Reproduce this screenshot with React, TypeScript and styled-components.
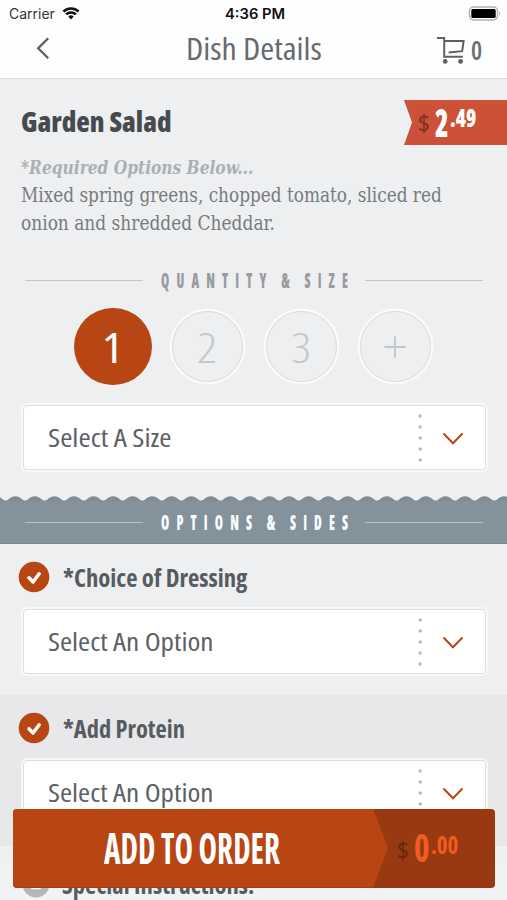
import React, { useLayoutEffect, useRef, useState } from "react";
import styled, { createGlobalStyle, css } from "styled-components";

const sans = `"Open Sans", "Noto Sans", sans-serif`;
const serif = `"DejaVu Serif", "Liberation Serif", serif`;
const rust = "#b84614";

const GlobalStyle = createGlobalStyle`
  * { box-sizing: border-box; }
  html, body { margin: 0; padding: 0; }
  body { background: #eeeff1; overflow: hidden; }
`;

/* Text set to an exact measure, condensed horizontally when needed. */
interface FaceProps {
  $w: number;
  $size: number;
  $line: number;
  $color: string;
  $weight?: number;
  $serif?: boolean;
  $italic?: boolean;
  $track?: number;
  $family?: string;
}

const Measure = styled.span<FaceProps>`
  display: block;
  flex: none;
  width: ${(p) => p.$w}px;
  height: ${(p) => p.$line}px;
  font-family: ${(p) => p.$family ?? (p.$serif ? serif : sans)};
  font-size: ${(p) => p.$size}px;
  line-height: ${(p) => p.$line}px;
  font-weight: ${(p) => p.$weight ?? 400};
  font-stretch: 75%;
  color: ${(p) => p.$color};
  white-space: nowrap;
  ${(p) => p.$italic && css`font-style: italic;`}
  ${(p) => p.$track && css`
    letter-spacing: ${p.$track}px;
    word-spacing: -3px;
  `}
`;

const Glyphs = styled.span<{ $track?: number }>`
  display: inline-block;
  vertical-align: top;
  transform-origin: 0 50%;
  margin-right: ${(p) => -(p.$track ?? 0)}px;
`;

function Fit({ children, ...face }: FaceProps & { children: string }) {
  const ref = useRef<HTMLSpanElement>(null);
  const [scale, setScale] = useState(1);
  useLayoutEffect(() => {
    const el = ref.current;
    if (el) setScale(face.$w / (el.offsetWidth - (face.$track ?? 0)));
  }, [children, face.$w, face.$track]);
  return (
    <Measure {...face}>
      <Glyphs ref={ref} $track={face.$track} style={{ transform: `scaleX(${scale})` }}>
        {children}
      </Glyphs>
    </Measure>
  );
}

const Screen = styled.main`
  position: relative;
  width: 507px;
  height: 900px;
  overflow: hidden;
  background: #eeeff1;
`;

const StatusBar = styled.div`
  display: grid;
  grid-template-columns: 1fr auto 1fr;
  align-items: center;
  height: 27px;
  padding: 0 6px 0 9px;
  background: #fefefe;
`;

const Carrier = styled.div`
  display: flex;
  align-items: center;
  gap: 7px;
`;

const BatterySlot = styled.div`
  display: flex;
  justify-content: flex-end;
`;

const NavBar = styled.header`
  display: flex;
  align-items: center;
  height: 52px;
  padding: 0 25px 9px 35px;
  background: #fefefe;
  border-bottom: 1px solid #dcdddd;
`;

const BackSlot = styled.div`
  display: flex;
  width: 151px;
`;

const Cart = styled.div`
  display: flex;
  align-items: center;
  gap: 6px;
  margin-left: auto;
  padding-top: 3px;
`;

const Intro = styled.section`
  height: 189px;
  padding: 27px 0 0 21px;
`;

const TitleRow = styled.div`
  display: flex;
  justify-content: space-between;
  height: 48px;
`;

const PriceTag = styled.div`
  display: flex;
  align-items: flex-start;
  width: 103px;
  height: 45px;
  margin-top: -6px;
  padding-left: 14px;
  background: #cb5138;
  clip-path: polygon(0 0, 100% 0, 100% 100%, 0 100%, 8px 50%);
`;

const Dollar = styled.div`
  margin: 8px 5px 0 0;
`;

const Cents = styled.div`
  margin: 5px 0 0 1px;
`;

const Divider = styled.div<{ $light?: boolean }>`
  display: flex;
  align-items: center;
  justify-content: space-between;
  height: 24px;
  padding: 0 24px 0 25px;
  &::before,
  &::after {
    content: "";
    width: 118px;
    height: 1px;
    background: ${(p) => (p.$light ? "#b7c1c8" : "#c4c5c6")};
  }
`;

const Quantities = styled.div`
  display: flex;
  align-items: center;
  gap: 17px;
  height: 78px;
  margin: 15.5px 0 19.5px;
  padding-left: 74px;
`;

const Quantity = styled.div<{ $active?: boolean }>`
  display: flex;
  align-items: center;
  justify-content: center;
  flex: none;
  width: 71px;
  height: 71px;
  margin: 0 3px;
  border-radius: 50%;
  border: 1px solid #d9dbdc;
  box-shadow: 0 0 0 2.5px #f9fafa;
  ${(p) =>
    p.$active &&
    css`
      width: 77.5px;
      height: 77.5px;
      margin: 0;
      border: 0;
      background: ${rust};
      box-shadow: none;
    `}
`;

const SelectBox = styled.div`
  display: flex;
  align-items: center;
  width: 463px;
  height: 65px;
  margin-left: 22.5px;
  padding-left: 24px;
  background: #fff;
  border: 1px solid #dcdee0;
  border-radius: 4px;
  box-shadow: 0 0 0 2px #f7f8f8;
`;

const Perforation = styled.svg`
  display: block;
  margin-left: auto;
`;

const ChevronSlot = styled.div`
  display: flex;
  margin: 2px 21px 0 20px;
`;

const Band = styled.div`
  height: 48px;
  margin-top: 26px;
`;

const BandFill = styled.div`
  height: 43px;
  padding-top: 9px;
  background: #84929b;
  border-bottom: 1px solid #7b898f;
`;

const OptionGroup = styled.section<{ $shade?: boolean }>`
  height: 151px;
  padding-top: 16px;
  background: ${(p) => (p.$shade ? "#e8e8ea" : "#eeeff1")};
`;

const OptionHead = styled.div`
  display: flex;
  align-items: center;
  gap: 13px;
  height: 34px;
  margin-bottom: 15px;
  padding-left: 18px;
`;

const HeadText = styled.div`
  padding-top: 1px;
`;

const Special = styled.section`
  display: flex;
  align-items: center;
  gap: 12px;
  height: 60px;
  padding: 16px 0 0 22px;
  background: linear-gradient(#eef1f2, #f1f3f5);
`;

const OrderButton = styled.div`
  position: absolute;
  left: 13px;
  top: 808.5px;
  display: flex;
  width: 482px;
  height: 79px;
  border-radius: 4px;
  overflow: hidden;
  background: #983912;
`;

const OrderLabel = styled.div`
  display: flex;
  align-items: center;
  width: 375px;
  padding: 0 0 2px 91px;
  background: ${rust};
  clip-path: polygon(0 0, 360px 0, 375px 50%, 360px 100%, 0 100%);
`;

const OrderTotal = styled.div`
  display: flex;
  align-items: flex-start;
  padding: 18px 0 0 9px;
`;

function Select({ label, width }: { label: string; width: number }) {
  return (
    <SelectBox>
      <Fit $w={width} $size={24.5} $line={64} $color="#5c6165">{label}</Fit>
      <Perforation width="4" height="50" viewBox="0 0 4 50" fill="#bbb">
        {[3, 14, 25, 36, 47].map((y) => (
          <circle key={y} cx="2.2" cy={y} r="1.8" />
        ))}
      </Perforation>
      <ChevronSlot>
        <svg width="22" height="14" viewBox="0 0 22 14" fill="none" stroke={rust} strokeWidth="2">
          <path d="M1.5 1.5 11 11.2l9.5-9.7" />
        </svg>
      </ChevronSlot>
    </SelectBox>
  );
}

function Check() {
  return (
    <svg width="32" height="32" viewBox="0 0 32 32" fill="none">
      <circle cx="16" cy="16" r="15.3" fill={rust} />
      <path d="m11 16.8 4 4.2 6.2-8.2" stroke="#fff" strokeWidth="3.5" strokeLinecap="round" strokeLinejoin="round" />
    </svg>
  );
}

/* Rolling edge of the band: one smooth crest per period. */
const period = 19.55;
const half = period / 2;
const wave = Array.from({ length: 28 }, (_, i) => {
  const crest = -4.2 + i * period;
  return (
    `C${crest - half + 3} 4.6 ${crest - 5.5} .2 ${crest} .2` +
    `S${crest + half - 3} 4.6 ${crest + half} 4.6`
  );
}).join("");

export default function App() {
  return (
    <Screen>
      <GlobalStyle />
      <StatusBar>
        <Carrier>
          <Fit $w={46} $size={14} $line={27} $color="#333" $family='"Inter", sans-serif'>Carrier</Fit>
          <svg width="18" height="13" viewBox="0 0 17 13" fill="none" stroke="#111" strokeWidth="2.5">
            <path d="M.9 4.5a11 11 0 0 1 15.2 0M3.6 7.4a7 7 0 0 1 9.8 0" />
            <path d="M5.8 9.6a4 4 0 0 1 5.4 0L8.5 12.4Z" fill="#111" stroke="none" />
          </svg>
        </Carrier>
        <Fit $w={60} $size={14} $line={27} $weight={600} $color="#111" $family='"Inter", sans-serif'>4:36 PM</Fit>
        <BatterySlot>
          <svg width="33" height="16" viewBox="0 0 33 16">
            <rect x="1.5" y="1" width="28" height="13" rx="4" fill="#fff" stroke="#b0b0b0" strokeWidth="1.4" />
            <rect x="3.3" y="3" width="24.4" height="9" rx="1.5" />
            <path d="M31 5.5c1.3.8 1.3 3.2 0 4z" fill="#aaa" />
          </svg>
        </BatterySlot>
      </StatusBar>

      <NavBar>
        <BackSlot>
          <svg width="16" height="24" viewBox="0 0 16 24" fill="none" stroke="#5c6164" strokeWidth="2.3">
            <path d="M13.2 2.2 3.2 12.2l10 10" />
          </svg>
        </BackSlot>
        <Fit $w={136} $size={31.5} $line={42} $color="#666b6e">Dish Details</Fit>
        <Cart>
          <svg width="28" height="28" viewBox="0 0 28 28" fill="none" stroke="#5c6164" strokeWidth="2">
            <path d="M0 2h7.2v18.8h18.6M7.2 5h19.4l-1.4 10.2-13.6 1.4" />
            <circle cx="8.2" cy="25.4" r="2.4" fill="#5c6164" stroke="none" />
            <circle cx="23.6" cy="25.4" r="2.4" fill="#5c6164" stroke="none" />
          </svg>
          <Fit $w={11} $size={27} $line={30} $weight={600} $color="#6a6e71">0</Fit>
        </Cart>
      </NavBar>

      <Intro>
        <TitleRow>
          <Fit $w={151} $size={27.5} $line={32} $weight={800} $color="#454b4f">Garden Salad</Fit>
          <PriceTag>
            <Dollar><Fit $w={12} $size={24} $line={30} $weight={600} $color="#83321d">$</Fit></Dollar>
            <Fit $w={14} $size={39.5} $line={44} $weight={800} $color="#fff">2</Fit>
            <Cents><Fit $w={26} $size={25.5} $line={25} $weight={800} $color="#fff">.49</Fit></Cents>
          </PriceTag>
        </TitleRow>
        <Fit $w={232} $size={18.5} $line={27} $weight={700} $color="#aaafb4" $serif $italic>*Required Options Below...</Fit>
        <Fit $w={421} $size={19.5} $line={29} $color="#767b80" $serif>Mixed spring greens, chopped tomato, sliced red</Fit>
        <Fit $w={254} $size={19.5} $line={28} $color="#767b80" $serif>onion and shredded Cheddar.</Fit>
      </Intro>

      <Divider>
        <Fit $w={187} $size={20.5} $line={23} $weight={800} $color="#999b9e" $track={11}>QUANTITY &amp; SIZE</Fit>
      </Divider>
      <Quantities>
        <Quantity $active><Fit $w={21} $size={42} $line={74} $color="#fff">1</Fit></Quantity>
        <Quantity><Fit $w={20} $size={42} $line={70} $weight={300} $color="#c5c8ca">2</Fit></Quantity>
        <Quantity><Fit $w={20} $size={42} $line={70} $weight={300} $color="#c5c8ca">3</Fit></Quantity>
        <Quantity>
          <svg width="22" height="22" viewBox="0 0 22 22" stroke="#c2c5c7" strokeWidth="1.8">
            <path d="M11 .5v21M.5 11h21" />
          </svg>
        </Quantity>
      </Quantities>
      <Select label="Select A Size" width={123} />

      <Band>
        <svg width="507" height="5" viewBox="0 0 507 5" display="block">
          <path d={`M${-4.2 - half} 4.6${wave}V6H-20Z`} fill="#7f8d94" />
        </svg>
        <BandFill>
          <Divider $light>
            <Fit $w={187} $size={20.5} $line={24} $weight={800} $color="#fafdff" $track={11}>OPTIONS &amp; SIDES</Fit>
          </Divider>
        </BandFill>
      </Band>

      <OptionGroup>
        <OptionHead>
          <Check />
          <HeadText>
            <Fit $w={184} $size={24} $line={34} $weight={700} $color="#565c61">*Choice of Dressing</Fit>
          </HeadText>
        </OptionHead>
        <Select label="Select An Option" width={166} />
      </OptionGroup>
      <OptionGroup $shade>
        <OptionHead>
          <Check />
          <HeadText>
            <Fit $w={122} $size={24} $line={34} $weight={700} $color="#565c61">*Add Protein</Fit>
          </HeadText>
        </OptionHead>
        <Select label="Select An Option" width={166} />
      </OptionGroup>
      <Special>
        <svg width="28" height="28" viewBox="0 0 28 28">
          <circle cx="14" cy="14" r="13.5" fill="#b5b6b7" />
          <path d="M14 6v13M9.5 17.5h9" stroke="#fff" strokeWidth="3.5" />
        </svg>
        <HeadText>
          <Fit $w={192} $size={24} $line={34} $weight={700} $color="#565c61">Special Instructions:</Fit>
        </HeadText>
      </Special>

      <OrderButton>
        <OrderLabel>
          <Fit $w={176} $size={43} $line={77} $weight={700} $color="#fff">ADD TO ORDER</Fit>
        </OrderLabel>
        <OrderTotal>
          <Dollar><Fit $w={12} $size={24} $line={30} $weight={600} $color="#6c270a">$</Fit></Dollar>
          <Fit $w={16} $size={39.5} $line={41} $weight={700} $color="#f15d20">0</Fit>
          <Cents><Fit $w={27} $size={25.5} $line={24} $weight={700} $color="#f15d20">.00</Fit></Cents>
        </OrderTotal>
      </OrderButton>
    </Screen>
  );
}
